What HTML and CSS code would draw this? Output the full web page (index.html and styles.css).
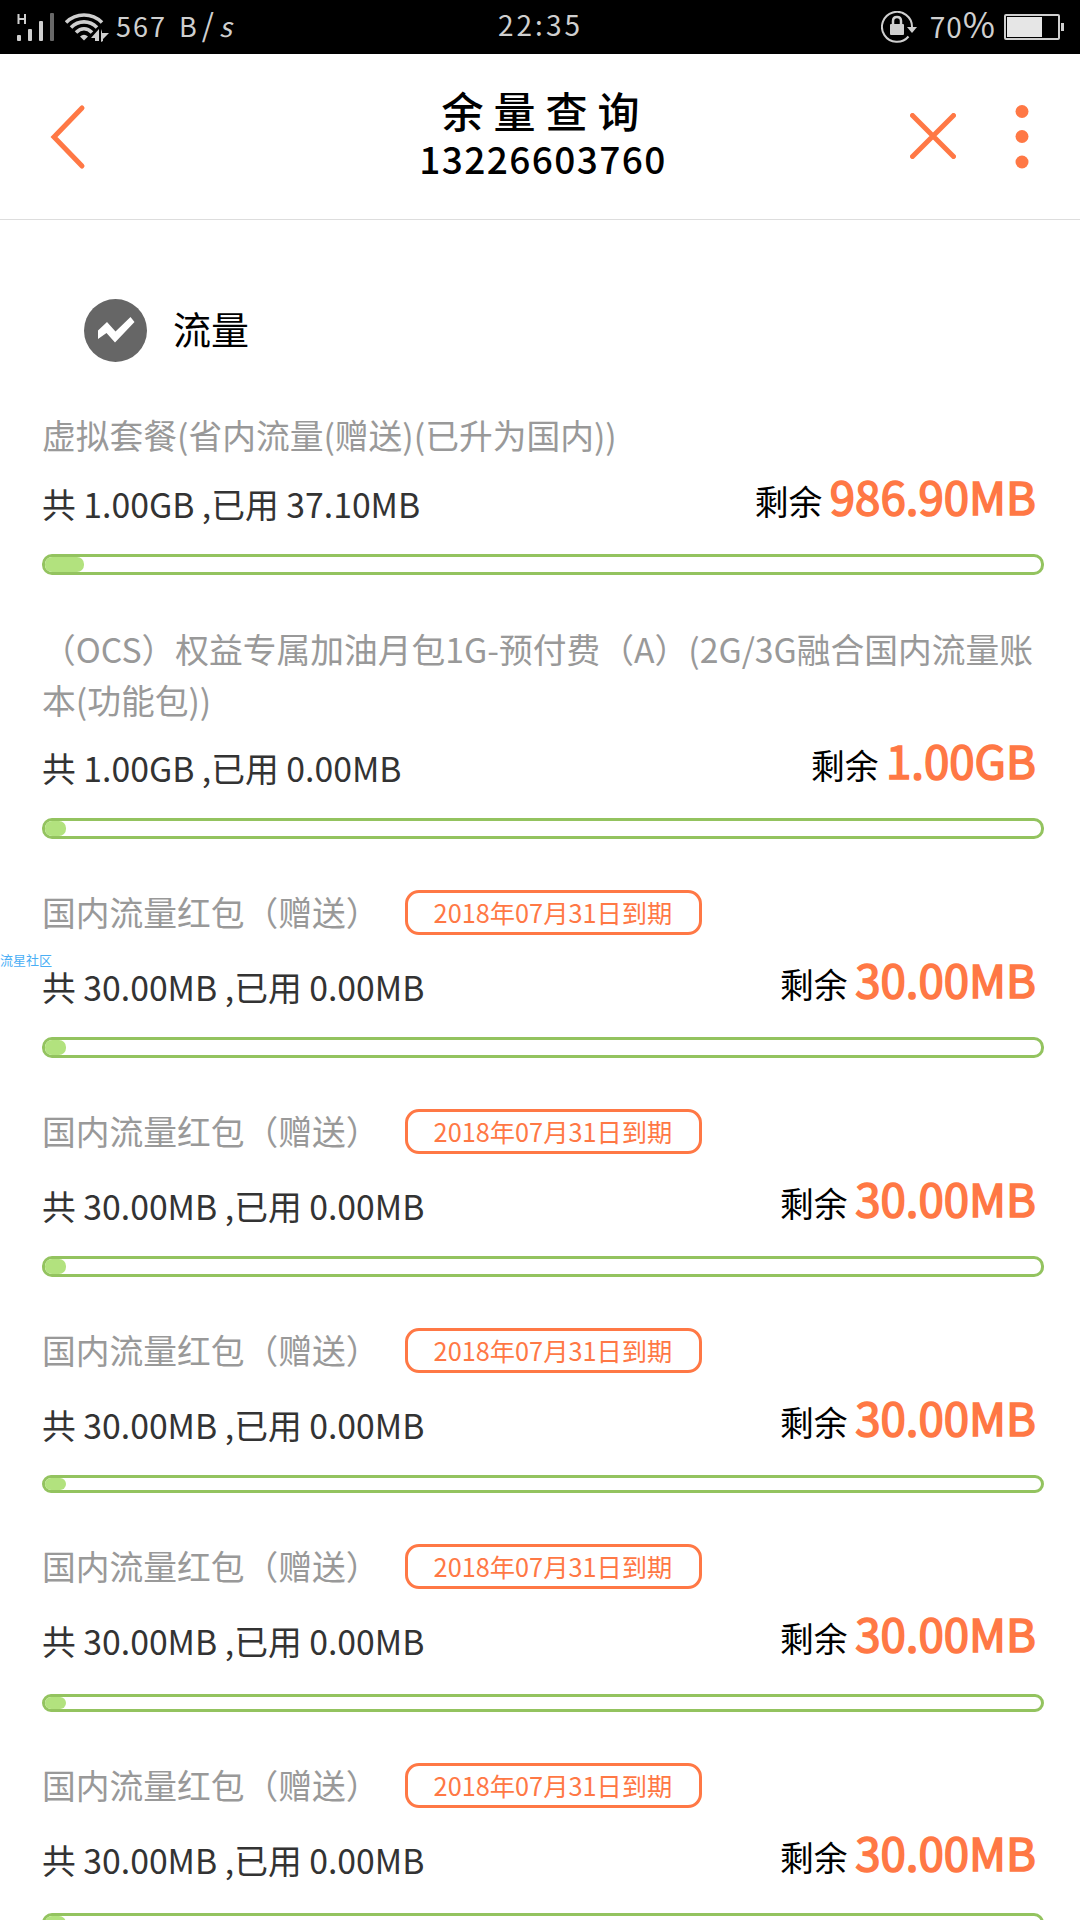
FILE: index.html
```html
<!DOCTYPE html>
<html lang="zh-CN">
<head>
    <meta charset="UTF-8">
    <meta name="viewport" content="width=device-width, initial-scale=1.0">
    <title>余量查询</title>
    <link rel="stylesheet" href="styles.css">
</head>
<body>
    <div class="status-bar">
        <div class="status-left">
            <svg class="signal" width="38" height="30" viewBox="0 0 38 30">
                <path d="M1.500 1v10M8 1v10M1.500 6H8" stroke="#cfcfcf" stroke-width="2" fill="none"/>
                <g fill="#cfcfcf">
                    <rect x="0" y="22" width="4" height="6" rx="1"/>
                    <rect x="11" y="16" width="4" height="12" rx="1"/>
                    <rect x="22" y="8" width="4" height="20" rx="1"/>
                </g>
                <rect x="33" y="0" width="4" height="28" rx="1" fill="#686868"/>
            </svg>
            <svg class="wifi" width="44" height="30" viewBox="0 0 44 30">
                <g fill="none" stroke="#cfcfcf" stroke-width="3.600">
                    <path d="M1 9.500C11 -.5 27 -.5 37 9.500"/>
                    <path d="M6 14.500C13.500 7 24.500 7 32 14.500"/>
                    <path d="M11 19.500C16 14.500 22 14.500 27 19.500"/>
                </g>
                <path d="M15 23.500q4-3.500 8 0l-4 4z" fill="#cfcfcf"/>
                <path d="M26 25l8-9v12h-4v-3zM36 16l1 3v1h7l-6 6v2l-2 1z" fill="#cfcfcf"/>
            </svg>
            <span class="speed">567 B<span class="slash">/</span><i>s</i></span>
        </div>
        <span class="clock">22:35</span>
        <div class="status-right">
            <svg class="rotate" width="36" height="34" viewBox="0 0 36 34">
                <path d="M27.500 25.500A15 15 0 1 1 31 16" fill="none" stroke="#cfcfcf" stroke-width="2"/>
                <path d="M26 16h10l-5 6z" fill="#cfcfcf"/>
                <rect x="9" y="13" width="14" height="11" rx="1" fill="#cfcfcf"/>
                <path d="M12 14V10q0-4 4-4t4 4v4" fill="none" stroke="#cfcfcf" stroke-width="2.500"/>
            </svg>
            <span class="percent">70<span class="sign">%</span></span>
            <svg class="battery" width="60" height="26" viewBox="0 0 60 26">
                <rect x="1" y="1" width="54" height="24" rx="1" fill="none" stroke="#cfcfcf" stroke-width="2"/>
                <rect x="3" y="3" width="35" height="20" fill="#e6e6e6"/>
                <rect x="57" y="9" width="3" height="8" fill="#cfcfcf"/>
            </svg>
        </div>
    </div>

    <header class="header">
        <svg class="back" width="36" height="66" viewBox="0 0 36 66">
            <path d="M32 4L4 33l28 29" />
        </svg>
        <div class="heading">
            <h1>余量查询</h1>
            <p>13226603760</p>
        </div>
        <svg class="close" width="46" height="46" viewBox="0 0 46 46">
            <path d="M2.500 2.500l41 41M43.500 2.500l-41 41" />
        </svg>
        <svg class="more" width="14" height="64" viewBox="0 0 14 64">
            <circle cx="7" cy="6.500" r="6.500"/>
            <circle cx="7" cy="31.500" r="6.500"/>
            <circle cx="7" cy="57" r="6.500"/>
        </svg>
    </header>

    <main>
        <div class="section">
            <svg width="63" height="63" viewBox="0 0 63 63">
                <circle cx="31.500" cy="31.500" r="31.500" fill="#666"/>
                <path d="M14 31.500l9-8.500 8.500 9.500 15-14.500 4 5L31 43.500l-8.500-9.500-8.500 6z" fill="#fff"/>
            </svg>
            <h2>流量</h2>
        </div>

        <div class="item">
            <div class="name">虚拟套餐(省内流量(赠送)(已升为国内))</div>
            <div class="usage"><span class="used">共 1.00GB ,已用 37.10MB</span><span class="left">剩余 <b>986.90MB</b></span></div>
            <div class="bar"><div class="fill" style="width: 39px"></div></div>
        </div>
        <div class="item">
            <div class="name">（OCS）权益专属加油月包1G-预付费（A）(2G/3G融合国内流量账本(功能包))</div>
            <div class="usage"><span class="used">共 1.00GB ,已用 0.00MB</span><span class="left">剩余 <b>1.00GB</b></span></div>
            <div class="bar"><div class="fill"></div></div>
        </div>
        <div class="item gift">
            <div class="name">国内流量红包（赠送）<span class="expire">2018年07月31日到期</span></div>
            <div class="usage"><span class="used">共 30.00MB ,已用 0.00MB</span><span class="left">剩余 <b>30.00MB</b></span></div>
            <div class="bar"><div class="fill"></div></div>
        </div>
        <div class="item gift">
            <div class="name">国内流量红包（赠送）<span class="expire">2018年07月31日到期</span></div>
            <div class="usage"><span class="used">共 30.00MB ,已用 0.00MB</span><span class="left">剩余 <b>30.00MB</b></span></div>
            <div class="bar"><div class="fill"></div></div>
        </div>
        <div class="item gift">
            <div class="name">国内流量红包（赠送）<span class="expire">2018年07月31日到期</span></div>
            <div class="usage"><span class="used">共 30.00MB ,已用 0.00MB</span><span class="left">剩余 <b>30.00MB</b></span></div>
            <div class="bar thin"><div class="fill"></div></div>
        </div>
        <div class="item gift tall">
            <div class="name">国内流量红包（赠送）<span class="expire">2018年07月31日到期</span></div>
            <div class="usage"><span class="used">共 30.00MB ,已用 0.00MB</span><span class="left">剩余 <b>30.00MB</b></span></div>
            <div class="bar thin"><div class="fill"></div></div>
        </div>
        <div class="item gift tall">
            <div class="name">国内流量红包（赠送）<span class="expire">2018年07月31日到期</span></div>
            <div class="usage"><span class="used">共 30.00MB ,已用 0.00MB</span><span class="left">剩余 <b>30.00MB</b></span></div>
            <div class="bar"><div class="fill"></div></div>
        </div>
    </main>
    <div class="watermark">流星社区</div>
</body>
</html>
```
FILE: styles.css
```css
* { box-sizing: border-box; margin: 0; padding: 0; }
body { width: 1080px; height: 1920px; overflow: hidden; position: relative; background: #fff; color: #000; font-family: "Noto Sans CJK SC", sans-serif; }
svg { display: block; flex: none; }

.status-bar { display: grid; grid-template-columns: 1fr auto 1fr; height: 54px; padding: 0 16px 0 17px; background: #000; color: #cfcfcf; font-size: 27px; line-height: 47px; }
.status-left, .status-right { display: flex; align-items: flex-start; }
.status-right { justify-content: flex-end; }
.signal { margin-top: 13px; }
.wifi { margin: 13px 0 0 10px; }
.speed { margin-left: 7px; letter-spacing: 2px; white-space: pre; word-spacing: 4px; }
.slash { margin: 0 3px; font-size: 31px; }
.clock { font-size: 28px; line-height: 49px; letter-spacing: 3px; }
.rotate { margin-top: 11px; }
.percent { margin: 0 9px 0 13px; font-size: 28px; line-height: 45px; letter-spacing: 1px; }
.sign { font-size: 35px; letter-spacing: 0; }
.battery { margin-top: 14px; }

.header { display: flex; align-items: flex-start; height: 166px; border-bottom: 1px solid #ddd; }
.header svg { stroke: #ff7845; stroke-width: 5; stroke-linecap: round; fill: none; }
.back { margin: 50px 0 0 50px; }
.heading { width: 250px; margin: 29px 0 0 332px; text-align: center; white-space: nowrap; }
.heading h1 { font-size: 42px; font-weight: 500; line-height: 54px; letter-spacing: 10px; text-indent: 5px; }
.heading p { font-size: 37px; font-weight: 500; line-height: 43px; letter-spacing: 1.400px; }
.header .close { margin: 59px 0 0 242px; }
.header .more { margin: 51px 0 0 59px; fill: #ff7845; stroke: none; }

main { padding: 79px 36px 0 42px; }
.section { display: flex; align-items: center; height: 63px; margin: 0 0 48px 42px; }
.section h2 { margin: -6px 0 0 26px; font-size: 38px; font-weight: 400; }

.item { margin-bottom: 48px; }
.name { color: #999; font-size: 33.750px; line-height: 50px; padding-bottom: 1px; }
.item:nth-child(3) .name { line-height: 51px; padding: 0; }
.usage { display: flex; justify-content: space-between; height: 80px; padding-right: 8px; line-height: 50px; font-size: 33.750px; margin-top: 13px; }
.used { color: #333; padding-top: 5px; }
.left { margin-top: -4px; }
.left b { color: #ff7845; font-size: 45.600px; font-weight: 400; -webkit-text-stroke: 1.600px #ff7845; }
.gift .name { height: 51px; }
.gift .usage { margin-top: 19px; }
.tall .usage { height: 83px; }
.bar { height: 21px; border: 3px solid #93c35f; border-radius: 10px; }
.bar.thin { height: 18px; }
.fill { width: 21px; height: 100%; background: #b2e27e; border-radius: 7px; }
.expire { display: inline-block; width: 297px; height: 45px; margin: 3px 0 0 25px; border: 3px solid #ff7845; border-radius: 14px; color: #ff7845; font-size: 25.300px; line-height: 38px; text-align: center; vertical-align: top; }

.watermark { position: absolute; left: 0; top: 950px; color: #4aaef5; font-size: 13px; line-height: 20px; }
```
